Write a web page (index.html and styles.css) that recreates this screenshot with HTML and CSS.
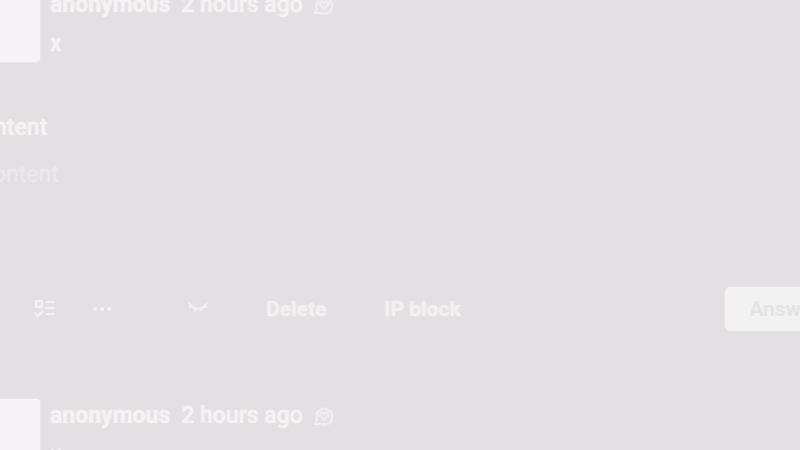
FILE: index.html
```
<!DOCTYPE html>
<html lang="en">
<head>
<meta charset="utf-8">
<title>Comments</title>
<link rel="stylesheet" href="styles.css">
</head>
<body>
<main class="thread">
  <article class="comment">
    <header class="head">
      <div class="avatar"></div>
      <div class="body">
        <div class="meta">
          <strong>anonymous</strong>
          <time>2 hours ago</time>
          <svg class="badge" viewBox="0 0 20 20" aria-hidden="true"><path d="M3 14a8 8 0 1 1 4 4H1z"/><path d="M10 14 6 10a2 2 0 0 1 4-2 2 2 0 0 1 4 2z"/></svg>
        </div>
        <p class="text">x</p>
      </div>
    </header>
    <form class="reply">
      <label class="label" for="content">Content</label>
      <input class="field" id="content" type="text" placeholder="Content">
    </form>
    <footer class="tools">
      <button class="tool list" type="button" aria-label="List"><svg width="22" height="20" viewBox="0 0 22 20"><rect x="2" y="2" width="6" height="6" rx="1"/><path d="m1 14 3 3 5-5M12 3h9M12 9h9M12 15h9"/></svg></button>
      <button class="tool more" type="button" aria-label="More"><svg width="20" height="20" viewBox="0 0 20 20"><g class="dots"><circle cx="3" cy="10" r="2"/><circle cx="10" cy="10" r="2"/><circle cx="17" cy="10" r="2"/></g></svg></button>
      <button class="tool hide" type="button" aria-label="Hide"><svg width="20" height="20" viewBox="0 0 20 20"><path d="M1 3c3 9 15 9 18 0M4 7 1 8M8 9l-1 3M12 9l1 3M16 7l3 1"/></svg></button>
      <button class="tool delete" type="button">Delete</button>
      <button class="tool" type="button">IP block</button>
      <button class="answer" type="button">Answer</button>
    </footer>
  </article>
  <article class="comment">
    <header class="head">
      <div class="avatar"></div>
      <div class="body">
        <div class="meta">
          <strong>anonymous</strong>
          <time>2 hours ago</time>
          <svg class="badge" viewBox="0 0 20 20" aria-hidden="true"><path d="M3 14a8 8 0 1 1 4 4H1z"/><path d="M10 14 6 10a2 2 0 0 1 4-2 2 2 0 0 1 4 2z"/></svg>
        </div>
        <p class="text">x</p>
      </div>
    </header>
  </article>
</main>
</body>
</html>
```
FILE: styles.css
```
* {
  box-sizing: border-box;
}

body {
  margin: 0;
  height: 100vh;
  overflow: hidden;
  background: #e3dfe2;
  color: #f4f3f4;
  font: 500 23px/28px Roboto, sans-serif;
  text-shadow: 0 0 2px #f4f3f4;
}

.thread {
  margin: -12px -44px 0 -34px;
}

.comment {
  padding-bottom: 68px;
}

.head {
  display: flex;
  gap: 10px;
}

.avatar {
  width: 74px;
  height: 74px;
  border-radius: 4px;
  background: #f5f3f5;
  box-shadow: 0 0 2px #f5f3f5;
}

.meta {
  display: flex;
  align-items: center;
  gap: 11px;
  height: 34px;
}

.meta strong {
  font-weight: 700;
}

.badge {
  width: 20px;
  height: 20px;
  stroke: #efedef;
}

svg {
  display: block;
  overflow: visible;
  fill: none;
  stroke: #f2f1f2;
  stroke-width: 2;
  filter: drop-shadow(0 0 1px #ebe9eb);
}

.dots {
  fill: #f2f1f2;
  stroke: none;
}

.text {
  margin: 8px 0 0;
}

.reply {
  display: flex;
  flex-direction: column;
  gap: 16px;
  margin-top: 52px;
}

.field {
  height: 32px;
  padding: 0 12px;
  border: 0;
  background: transparent;
  color: inherit;
  font: 400 23px/28px Roboto, sans-serif;
}

.field::placeholder {
  color: #eae8ea;
  opacity: 1;
  text-shadow: 0 0 2px #eae8ea;
}

.tools {
  display: flex;
  align-items: center;
  margin-top: 97px;
  padding-left: 68px;
}

.tool,
.answer {
  padding: 0;
  border: 0;
  background: transparent;
  color: #f2f0f1;
  font: 700 21px/28px Roboto, sans-serif;
  text-shadow: 0 0 2px #f2f0f1;
}

.list {
  margin-right: 36px;
}

.more {
  margin-right: 76px;
}

.hide {
  margin-right: 58px;
}

.delete {
  margin-right: 58px;
}

.answer {
  height: 44px;
  margin-left: auto;
  padding: 0 24px;
  border-radius: 6px;
  background: #f3f2f3;
  box-shadow: 0 0 2px #f3f2f3;
  color: #e5e4e5;
}
```
